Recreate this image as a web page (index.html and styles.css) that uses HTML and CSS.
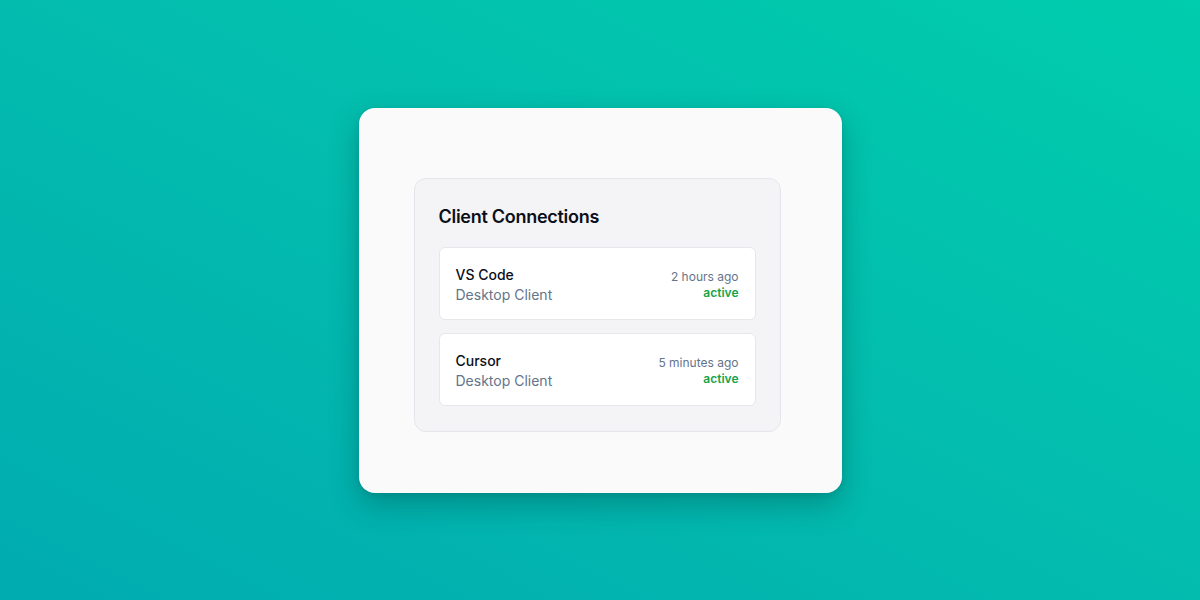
FILE: index.html
```html
<!DOCTYPE html>
<html>
<head>
<meta charset="utf-8">
<link rel="stylesheet" href="styles.css">
</head>
<body>
<div class="stage">
  <div class="card">
    <div class="panel">
      <h2 class="title">Client Connections</h2>
      <div class="list">
        <div class="item">
          <div class="info">
            <div class="name">VS Code</div>
            <div class="desc">Desktop Client</div>
          </div>
          <div class="meta">
            <div class="time">2 hours ago</div>
            <div class="status">active</div>
          </div>
        </div>
        <div class="item">
          <div class="info">
            <div class="name">Cursor</div>
            <div class="desc">Desktop Client</div>
          </div>
          <div class="meta">
            <div class="time">5 minutes ago</div>
            <div class="status">active</div>
          </div>
        </div>
      </div>
    </div>
  </div>
</div>
</body>
</html>
```
FILE: styles.css
```css
* { box-sizing: border-box; }
html, body { margin: 0; padding: 0; }
body {
  width: 1200px;
  height: 600px;
  font-family: Inter, "Noto Sans", sans-serif;
  background: linear-gradient(to top right, #00abb0 0%, #03bcae 50%, #00cdad 100%);
  overflow: hidden;
}
.stage {
  width: 1200px;
  height: 600px;
  display: flex;
  align-items: center;
  justify-content: center;
  padding-top: 1px;
}
.card {
  width: 483px;
  height: 385px;
  background: #fafafa;
  border-radius: 16px;
  padding: 70px 61px 0 55px;
  box-shadow: 0 12px 30px rgba(0, 40, 40, 0.28), 0 2px 6px rgba(0, 0, 0, 0.08);
}
.panel {
  width: 100%;
  background: #f4f4f6;
  border: 1px solid #e4e6eb;
  border-radius: 12px;
  padding: 24px 24px 25px 24px;
}
.title {
  margin: 0 0 16px 0;
  font-size: 18px;
  line-height: 28px;
  font-weight: 600;
  letter-spacing: -0.28px;
  color: #0b0f19;
}
.list {
  display: flex;
  flex-direction: column;
  gap: 13px;
}
.item {
  background: #ffffff;
  border: 1px solid #e5e7eb;
  border-radius: 6px;
  height: 73px;
  padding: 2px 16px 0 16px;
  display: flex;
  justify-content: space-between;
  align-items: center;
}
.name {
  font-size: 14px;
  line-height: 20px;
  font-weight: 500;
  color: #0b0f19;
}
.desc {
  font-size: 14px;
  line-height: 20px;
  color: #64748b;
}
.meta {
  text-align: right;
}
.time {
  font-size: 12px;
  line-height: 16px;
  color: #64748b;
}
.status {
  font-size: 12px;
  line-height: 16px;
  font-weight: 600;
  color: #16a34a;
}
```
